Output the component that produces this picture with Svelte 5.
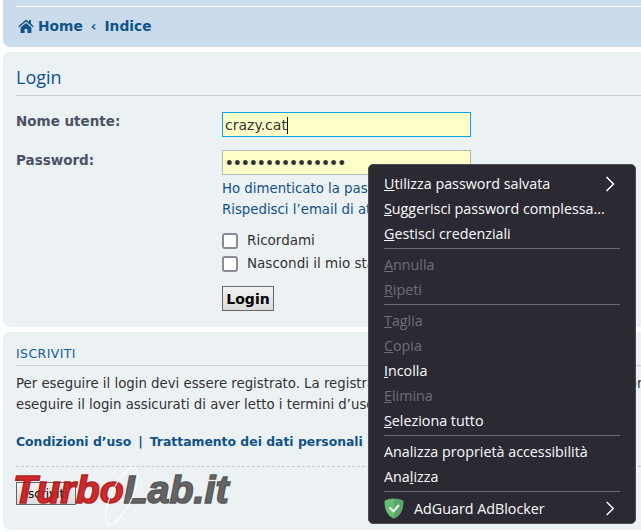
<script lang="ts">
  type Item = { label: string; key?: number; off?: boolean; more?: boolean };
  const groups: Item[][] = [
    [
      { label: "Utilizza password salvata", key: 0, more: true },
      { label: "Suggerisci password complessa...", key: 0 },
      { label: "Gestisci credenziali", key: 0 }
    ],
    [
      { label: "Annulla", key: 0, off: true },
      { label: "Ripeti", key: 0, off: true }
    ],
    [
      { label: "Taglia", key: 0, off: true },
      { label: "Copia", key: 0, off: true },
      { label: "Incolla", key: 0 },
      { label: "Elimina", key: 0, off: true },
      { label: "Seleziona tutto", key: 0 }
    ],
    [
      { label: "Analizza proprietà accessibilità" },
      { label: "Analizza", key: 3 }
    ]
  ];
</script>

<div class="page">
  <div class="navbar">
    <div class="crumbs">
      <svg class="home" viewBox="0 0 16 14" width="16" height="14"><path d="M8 0.5 0.3 7.2l0.9 1L8 2.4l6.8 5.8 0.9-1L13 4.8V1h-2v2.1zM2.6 8.6V14h4V10h2.8v4h4V8.6L8 3.9z" fill="#105289"/></svg>
      <a href="#home">Home</a>
      <span class="sep">‹</span>
      <a href="#indice">Indice</a>
    </div>
  </div>

  <section class="panel login">
    <h2>Login</h2>
    <div class="field first">
      <div class="label">Nome utente:</div>
      <div class="input focused">crazy.cat<span class="caret"></span></div>
    </div>
    <div class="field">
      <div class="label">Password:</div>
      <div class="col">
        <div class="input dots">•••••••••••••••</div>
        <a class="link" href="#pw">Ho dimenticato la password</a>
        <a class="link" href="#mail">Rispedisci l’email di attivazione</a>
        <label class="check first-check"><span class="box"></span>Ricordami</label>
        <label class="check"><span class="box"></span>Nascondi il mio stato in linea</label>
        <button class="btn">Login</button>
      </div>
    </div>
  </section>

  <section class="panel signup">
    <h3>ISCRIVITI</h3>
    <p>Per eseguire il login devi essere registrato. La registrazione richiede solo pochi secondi. Per ora</p>
    <p>eseguire il login assicurati di aver letto i termini d’uso.</p>
    <div class="terms"><a href="#c">Condizioni d’uso</a><span class="pipe">|</span><a href="#t">Trattamento dei dati personali</a></div>
    <div class="dashed"></div>
    <button class="btn small">Iscriviti</button>
  </section>
</div>

<div class="watermark">
  <svg class="swoosh" viewBox="0 0 40 64" width="40" height="64"><ellipse cx="20" cy="32" rx="10" ry="31" transform="rotate(24 20 32)" fill="none" stroke="#fff" stroke-width="1"/></svg>
  <span class="red">Turbo</span><span class="grey">Lab.it</span>
</div>

<div class="menu">
  {#each groups as group, g}
    {#if g > 0}<div class="rule"></div>{/if}
    {#each group as item}
      <div class="item" class:off={item.off}>
        <span>{#if item.key !== undefined}{item.label.slice(0, item.key)}<u>{item.label[item.key]}</u>{item.label.slice(item.key + 1)}{:else}{item.label}{/if}</span>
        {#if item.more}
          <svg class="arrow" viewBox="0 0 10 16" width="10" height="16"><path d="M1.5 1 8.5 8 1.5 15" fill="none" stroke="#fff" stroke-width="1.5"/></svg>
        {/if}
      </div>
    {/each}
  {/each}
  <div class="rule"></div>
  <div class="item adguard">
    <svg viewBox="0 0 20 21" width="20" height="21"><path d="M10 0.5C7 0.5 3.5 1.3 0.5 2.8 0.5 10 2 17 10 20.8Z" fill="#68bc71"/><path d="M10 0.5C13 0.5 16.5 1.3 19.5 2.8 19.5 10 18 17 10 20.8Z" fill="#5aa56b"/><path d="M5.5 9.5l4 4 5.5-6.500" fill="none" stroke="#e8f3ea" stroke-width="2.2"/></svg>
    <span class="grow">AdGuard AdBlocker</span>
    <svg class="arrow" viewBox="0 0 10 16" width="10" height="15"><path d="M1.5 1 8.5 8 1.5 15" fill="none" stroke="#fff" stroke-width="1.5"/></svg>
  </div>
</div>

<style>
  :global(body) {
    margin: 0;
    background: #fff;
    overflow: hidden;
    font-family: "DejaVu Sans", Verdana, sans-serif;
  }

  .page {
    width: 641px;
    height: 532px;
    padding-left: 3px;
    box-sizing: border-box;
    overflow: hidden;
  }

  .navbar {
    background: #cadceb;
    height: 47px;
    border-radius: 0 0 0 7px;
    padding: 6px 0 0 13px;
    box-sizing: border-box;
  }

  .crumbs {
    border-top: 1px solid #fff;
    padding-top: 11px;
    display: flex;
    align-items: center;
    gap: 4px;
    font-weight: bold;
    font-size: 13.8px;
    line-height: 16px;
  }

  .crumbs a {
    color: #105289;
    text-decoration: none;
  }

  .home {
    margin-left: 2px;
  }

  .sep {
    color: #105289;
    margin: 0 4px;
  }

  .panel {
    background: #ecf1f3;
    border-radius: 7px 0 0 7px;
    padding-left: 13px;
  }

  .login {
    height: 275px;
    margin-top: 5px;
    box-sizing: border-box;
    padding-top: 14px;
  }

  h2 {
    margin: 0;
    font: 400 18px/22px "Open Sans", "DejaVu Sans", sans-serif;
    color: #0f5296;
    height: 29px;
    border-bottom: 1px solid #ccc;
  }

  .field {
    display: flex;
    margin-top: 13px;
  }

  .field.first {
    margin-top: 16px;
  }

  .label {
    width: 206px;
    padding-top: 1px;
    font-weight: bold;
    font-size: 13.5px;
    line-height: 18px;
    color: #4a5365;
  }

  .first .label {
    padding-top: 0;
  }

  .col {
    display: flex;
    flex-direction: column;
    align-items: flex-start;
  }

  .input {
    width: 249px;
    height: 25px;
    box-sizing: border-box;
    background: #ffffc7;
    border: 1px solid #b5b5b5;
    font-size: 14px;
    line-height: 24px;
    padding-left: 2px;
    color: #333;
    white-space: nowrap;
    overflow: hidden;
  }

  .focused {
    border-color: #11a3ea;
  }

  .caret {
    display: inline-block;
    width: 1px;
    height: 17px;
    background: #111;
    vertical-align: -4px;
  }

  .dots {
    font-size: 13.5px;
    letter-spacing: -0.6px;
    font-weight: bold;
  }

  .link {
    color: #105289;
    font-size: 13.3px;
    line-height: 21px;
    text-decoration: none;
    white-space: nowrap;
  }

  .col .input + .link {
    margin-top: 3px;
  }

  .check {
    display: flex;
    align-items: center;
    gap: 9px;
    font-size: 13.5px;
    line-height: 23px;
    color: #333;
    white-space: nowrap;
  }

  .first-check {
    margin-top: 9px;
  }

  .box {
    flex-shrink: 0;
    width: 12px;
    height: 12px;
    background: #fff;
    border: 2px solid #8b8b98;
    border-radius: 3px;
  }

  .btn {
    margin-top: 11px;
    width: 52px;
    height: 25px;
    padding: 0;
    background: linear-gradient(#f2f2f2, #dcdcdc);
    border: 1px solid #666;
    font: bold 14px "DejaVu Sans", sans-serif;
    color: #000;
  }

  .signup {
    margin-top: 5px;
    height: 198px;
    box-sizing: border-box;
    padding-top: 14px;
  }

  h3 {
    margin: 0;
    font-size: 12.5px;
    font-weight: 400;
    letter-spacing: 0.4px;
    line-height: 15px;
    height: 19px;
    color: #115a9c;
    border-bottom: 1px solid #ccc;
  }

  p {
    margin: 0;
    font-size: 13.3px;
    line-height: 21px;
    color: #333;
    white-space: nowrap;
  }

  h3 + p {
    margin-top: 7px;
  }

  .terms {
    margin-top: 16px;
    font-size: 12.4px;
    font-weight: bold;
    line-height: 21px;
    color: #105289;
    white-space: nowrap;
  }

  .terms a {
    color: #105289;
    text-decoration: none;
  }

  .pipe {
    margin: 0 7px;
  }

  .dashed {
    margin-top: 14px;
    border-top: 1px dashed #ccc;
  }

  .btn.small {
    margin-top: 15px;
    width: 60px;
    height: 23px;
    font-weight: 400;
    font-size: 12px;
  }

  /* watermark sits over the page */
  .watermark {
    position: absolute;
    left: 13px;
    top: 466px;
    font: italic 900 38px/48px "Liberation Sans", Arial, sans-serif;
    white-space: nowrap;
    opacity: 0.94;
    transform: scaleX(1.035);
    transform-origin: left center;
  }

  .swoosh {
    position: absolute;
    left: 85px;
    top: -2px;
  }

  .red {
    color: #cf1f1f;
    -webkit-text-stroke: 1.5px #b01616;
  }

  .grey {
    color: #5d5d5d;
    -webkit-text-stroke: 1.5px #505050;
  }

  .menu {
    position: absolute;
    left: 368px;
    top: 164px;
    width: 268px;
    height: 360px;
    box-sizing: border-box;
    background: #2b2a33;
    border: 1px solid #4a4a50;
    border-radius: 5px;
    padding: 6px 15px 0;
    font: 14.3px/25px "Open Sans", "Noto Sans", sans-serif;
    color: #fbfbfe;
  }

  .item {
    display: flex;
    justify-content: space-between;
    align-items: center;
    height: 25px;
    white-space: nowrap;
  }

  .item.off {
    color: #6f6e76;
  }

  .adguard {
    justify-content: flex-start;
    gap: 10px;
    height: 27px;
  }

  .grow {
    flex: 1;
  }

  .arrow {
    margin-right: 5px;
  }

  .rule {
    height: 1px;
    background: #6a6a70;
    margin: 2px 0 3px;
  }
</style>
